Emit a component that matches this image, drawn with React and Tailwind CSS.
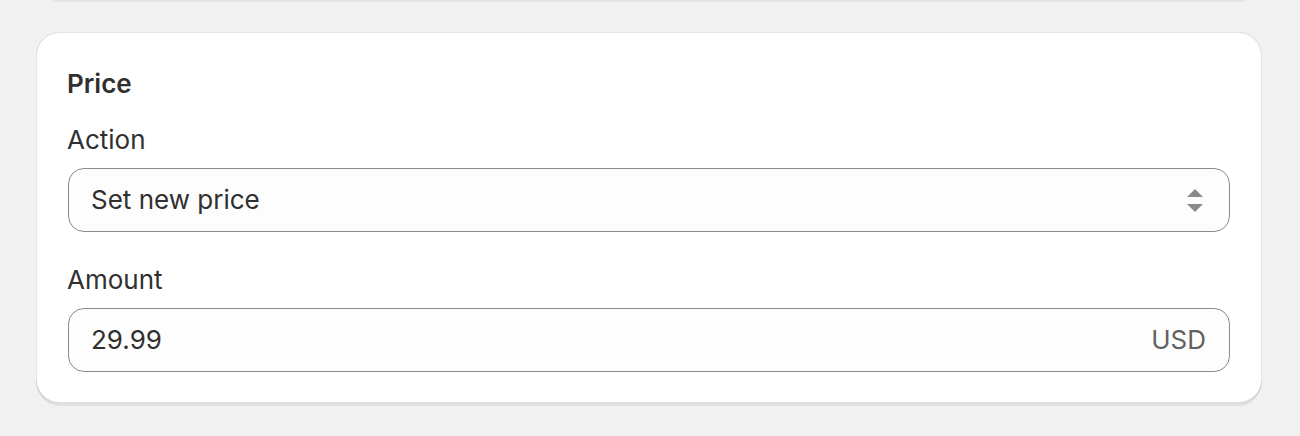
export default function App() {
  return (
    <div
      className="w-[1300px] h-[436px] bg-[#f1f1f1] overflow-hidden"
      style={{ fontFamily: 'Inter, "Noto Sans", sans-serif' }}
    >
      <div className="ml-[52px] w-[1193px] h-[2px] bg-[#e3e3e3] rounded-b-[2px]" />
      <div className="ml-[36px] mt-[30px] w-[1226px] rounded-[24px] bg-white px-[32px] pt-[32px] pb-[32px] shadow-[0_2px_0_0_rgba(26,26,26,0.07),inset_0_1px_0_0_rgba(204,204,204,0.5),inset_0_-2px_0_0_rgba(0,0,0,0.12),inset_-1px_0_0_0_rgba(0,0,0,0.1),inset_1px_0_0_0_rgba(0,0,0,0.1)]">
        <h2 className="-ml-px text-[26px] leading-[40px] font-semibold text-[#303030]">Price</h2>
        <div className="mt-[16px]">
          <div className="-ml-px text-[26px] leading-[40px] text-[#303030]">Action</div>
          <div className="mt-[8px] h-[64px] rounded-[16px] border border-[#8a8a8a] bg-[#fdfdfd] flex items-center justify-between pl-[22px] pr-[26px]">
            <span className="text-[26px] leading-[40px] text-[#303030]">Set new price</span>
            <svg width="16" height="23" viewBox="0 0 16 23" className="block">
              <path d="M8 0 L16 8 L0 8 Z" fill="#8a8a8a" />
              <path d="M0 15 L16 15 L8 23 Z" fill="#8a8a8a" />
            </svg>
          </div>
        </div>
        <div className="mt-[28px]">
          <div className="-ml-px text-[26px] leading-[40px] text-[#303030]">Amount</div>
          <div className="mt-[8px] h-[64px] rounded-[16px] border border-[#8a8a8a] bg-[#fdfdfd] flex items-center justify-between pl-[22px] pr-[23px]">
            <span className="text-[26px] leading-[40px] text-[#303030]">29.99</span>
            <span className="text-[26px] leading-[40px] text-[#616161]">USD</span>
          </div>
        </div>
      </div>
    </div>
  );
}
